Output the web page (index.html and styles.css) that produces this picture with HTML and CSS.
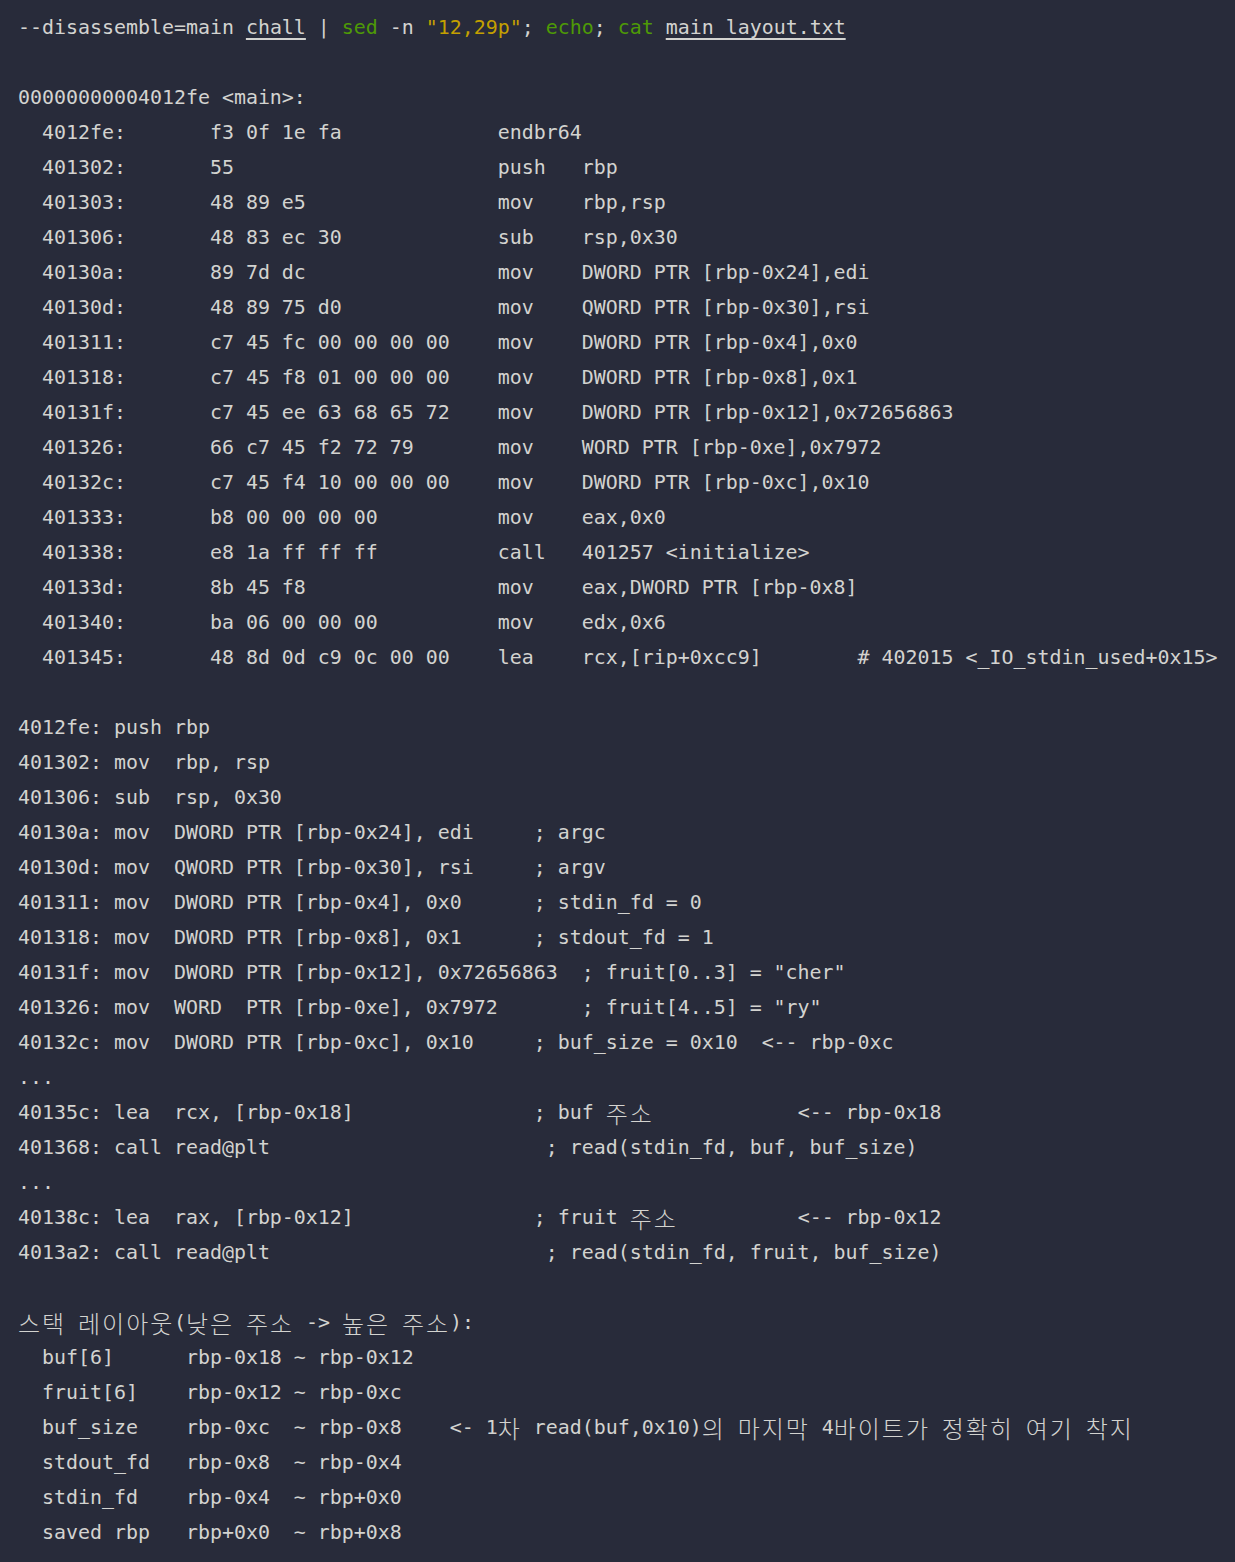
FILE: index.html
```html
<!DOCTYPE html>
<html lang="ko">
<head>
<meta charset="utf-8">
<title>terminal</title>
<link rel="stylesheet" href="styles.css">
</head>
<body>
<main class="term">
<pre class="out">--disassemble=main <span class="ul">chall</span> | <span class="g">sed</span> -n <span class="y">"12,29p"</span>; <span class="g">echo</span>; <span class="g">cat</span> <span class="ul">main_layout.txt</span>

00000000004012fe &lt;main&gt;:
  4012fe:       f3 0f 1e fa             endbr64
  401302:       55                      push   rbp
  401303:       48 89 e5                mov    rbp,rsp
  401306:       48 83 ec 30             sub    rsp,0x30
  40130a:       89 7d dc                mov    DWORD PTR [rbp-0x24],edi
  40130d:       48 89 75 d0             mov    QWORD PTR [rbp-0x30],rsi
  401311:       c7 45 fc 00 00 00 00    mov    DWORD PTR [rbp-0x4],0x0
  401318:       c7 45 f8 01 00 00 00    mov    DWORD PTR [rbp-0x8],0x1
  40131f:       c7 45 ee 63 68 65 72    mov    DWORD PTR [rbp-0x12],0x72656863
  401326:       66 c7 45 f2 72 79       mov    WORD PTR [rbp-0xe],0x7972
  40132c:       c7 45 f4 10 00 00 00    mov    DWORD PTR [rbp-0xc],0x10
  401333:       b8 00 00 00 00          mov    eax,0x0
  401338:       e8 1a ff ff ff          call   401257 &lt;initialize&gt;
  40133d:       8b 45 f8                mov    eax,DWORD PTR [rbp-0x8]
  401340:       ba 06 00 00 00          mov    edx,0x6
  401345:       48 8d 0d c9 0c 00 00    lea    rcx,[rip+0xcc9]        # 402015 &lt;_IO_stdin_used+0x15&gt;

4012fe: push rbp
401302: mov  rbp, rsp
401306: sub  rsp, 0x30
40130a: mov  DWORD PTR [rbp-0x24], edi     ; argc
40130d: mov  QWORD PTR [rbp-0x30], rsi     ; argv
401311: mov  DWORD PTR [rbp-0x4], 0x0      ; stdin_fd = 0
401318: mov  DWORD PTR [rbp-0x8], 0x1      ; stdout_fd = 1
40131f: mov  DWORD PTR [rbp-0x12], 0x72656863  ; fruit[0..3] = "cher"
401326: mov  WORD  PTR [rbp-0xe], 0x7972       ; fruit[4..5] = "ry"
40132c: mov  DWORD PTR [rbp-0xc], 0x10     ; buf_size = 0x10  &lt;-- rbp-0xc
...
40135c: lea  rcx, [rbp-0x18]               ; buf <span class="ko w2">주소</span>            &lt;-- rbp-0x18
401368: call read@plt                       ; read(stdin_fd, buf, buf_size)
...
40138c: lea  rax, [rbp-0x12]               ; fruit <span class="ko w2">주소</span>          &lt;-- rbp-0x12
4013a2: call read@plt                       ; read(stdin_fd, fruit, buf_size)

<span class="ko w2">스택</span> <span class="ko w4">레이아웃</span>(<span class="ko w2">낮은</span> <span class="ko w2">주소</span> -&gt; <span class="ko w2">높은</span> <span class="ko w2">주소</span>):
  buf[6]      rbp-0x18 ~ rbp-0x12
  fruit[6]    rbp-0x12 ~ rbp-0xc
  buf_size    rbp-0xc  ~ rbp-0x8    &lt;- 1<span class="ko w1">차</span> read(buf,0x10)<span class="ko w1">의</span> <span class="ko w3">마지막</span> 4<span class="ko w4">바이트가</span> <span class="ko w3">정확히</span> <span class="ko w2">여기</span> <span class="ko w2">착지</span>
  stdout_fd   rbp-0x8  ~ rbp-0x4
  stdin_fd    rbp-0x4  ~ rbp+0x0
  saved rbp   rbp+0x0  ~ rbp+0x8</pre>
</main>
</body>
</html>
```

FILE: styles.css
```css
html, body {
  margin: 0;
  padding: 0;
  background: #282b3a;
}

.term {
  background: #282b3a;
  min-height: 1562px;
  padding: 10px 0 0 18px;
  box-sizing: border-box;
}

.out {
  margin: 0;
  font-family: "DejaVu Sans Mono", "Liberation Mono", "Noto Sans CJK KR", monospace;
  font-size: 19.93px;
  line-height: 35px;
  color: #d3d3d0;
  white-space: pre;
}

.ko {
  display: inline-block;
  font-family: "Noto Sans CJK KR", sans-serif;
  font-size: 24px;
  line-height: 24px;
  font-weight: 300;
  letter-spacing: 2px;
  white-space: nowrap;
  vertical-align: -4px;
}

.w1 { width: 24px; }
.w2 { width: 48px; }
.w3 { width: 72px; }
.w4 { width: 96px; }

.g {
  color: #4e9a06;
}

.y {
  color: #c4a000;
}

.ul {
  text-decoration: underline;
  text-decoration-thickness: 2px;
  text-underline-offset: 4px;
}
```
